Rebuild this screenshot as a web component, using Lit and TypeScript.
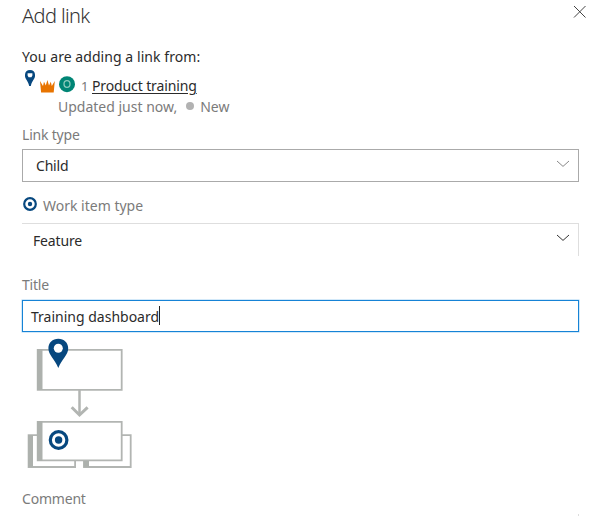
import { LitElement, html, css, svg } from "lit";
import { customElement } from "lit/decorators.js";

const pin = svg`<path fill="#07487f" fill-rule="evenodd" d="M5 0C2 0 0 1.8 0 4.7V6C0 9 3 10.5 4.2 16H5.8C7 10.5 10 9 10 6V4.7C10 1.8 8 0 5 0ZM2.6 3.2H7.4V5.6L6.4 7.2H3.6L2.6 5.6Z"/>`;

@customElement("app-root")
export class AppRoot extends LitElement {
  static styles = css`
    :host {
      display: block;
      box-sizing: border-box;
      width: 596px;
      height: 516px;
      overflow: hidden;
      padding: 0 17px 0 22px;
      background: #fff;
      font: 14px/20px "Noto Sans", "Open Sans", sans-serif;
      color: #2b2b2b;
      white-space: nowrap;
    }
    svg { display: block; flex: none; }
    .header { display: flex; justify-content: space-between; height: 47px; }
    h1 { margin: 2px 0 0; font: 300 20px/28px "Noto Sans", "Open Sans", sans-serif; letter-spacing: -0.6px; color: #333; }
    .close { margin: 5px -8px 0 0; }
    .intro { letter-spacing: 0.06px; height: 22px; }
    .item { display: flex; height: 28px; }
    .pin { margin: 1px 0 0 3px; }
    .crown { margin: 11px 0 0 5px; }
    .avatar { margin: 7px 0 0 4px; }
    .number { margin: 7px 4px 0 6px; width: 7px; font-size: 13px; color: #777; }
    .link { margin-top: 7px; letter-spacing: -0.12px; text-decoration: underline; text-underline-offset: 2px; }
    .meta { display: flex; align-items: center; height: 20px; padding-left: 36px; color: #7b7b7b; }
    .dot { width: 8px; height: 8px; border-radius: 50%; background: #b2b2b2; margin: -2px 6px 0 9px; }
    .label { display: flex; height: 20px; color: #7b7b7b; letter-spacing: -0.2px; }
    .link-type { margin-top: 8px; }
    .work-type { margin-top: 14px; gap: 6px; letter-spacing: 0; }
    .target { margin: 1px 0 0 1px; }
    .title { margin-top: 19px; }
    .comment { margin-top: 13px; }
    .field { display: flex; align-items: center; justify-content: space-between; box-sizing: border-box; height: 33px; width: 557px; }
    .type-field { margin-top: 4px; border: 1px solid #aaa; padding: 1px 8px 0 13px; letter-spacing: -0.2px; }
    .type-field svg { margin-top: -5px; }
    .item-field { margin-top: 7px; border-top: 1px solid #dedede; border-right: 1px solid #dedede; padding: 2px 8px 0 11px; letter-spacing: -0.15px; }
    .item-field svg { margin-top: -6px; }
    .title-field { height: 32px; margin-top: 5px; border: 1px solid #1683d6; padding: 1px 8px 0; justify-content: flex-start; letter-spacing: 0; box-shadow: 0 0 0 0.5px #a6d2f3; }
    .caret { width: 1px; height: 19px; background: #222; margin-top: -2px; }
    .diagram { height: 144px; }
    .edge { height: 6px; width: 1px; margin: 5px 0 0 556px; background: #ddd; }
  `;

  chevron(color: string) {
    return html`<svg width="14" height="8" viewBox="0 0 14 8"><path d="M1 1L7 6.4L13 1" fill="none" stroke=${color} stroke-width="1"/></svg>`;
  }

  render() {
    return html`
      <div class="header">
        <h1>Add link</h1>
        <svg class="close" width="14" height="14" viewBox="0 0 14 14"><path d="M1 1L12.5 12.5M12.5 1L1 12.5" stroke="#444" stroke-width="1"/></svg>
      </div>
      <div class="intro">You are adding a link from:</div>
      <div class="item">
        <svg class="pin" width="10" height="17" viewBox="0 0 10 17">${pin}</svg>
        <svg class="crown" width="15" height="13" viewBox="0 0 15 13"><path fill="#e87400" d="M0 1L3 6L4 1.8L5.8 5.5L7.4 0L9 5.5L10.8 1.8L11.8 6L14.8 1L13.7 12.5H1.1Z"/></svg>
        <svg class="avatar" width="16" height="17" viewBox="0 0 16 17"><circle cx="8" cy="8.2" r="8" fill="#008575"/><ellipse cx="8" cy="8" rx="3" ry="3.4" fill="none" stroke="#8bcabc" stroke-width="1.3"/></svg>
        <span class="number">1</span><span class="link">Product training</span>
      </div>
      <div class="meta"><span>Updated just now,</span><i class="dot"></i><span>New</span></div>
      <div class="label link-type">Link type</div>
      <div class="field type-field"><span>Child</span>${this.chevron("#888")}</div>
      <div class="label work-type">
        <svg class="target" width="14" height="14" viewBox="0 0 14 14"><circle cx="7" cy="7" r="5.8" fill="none" stroke="#07487f" stroke-width="2.2"/><circle cx="7" cy="7" r="2.2" fill="#07487f"/></svg>
        <span>Work item type</span>
      </div>
      <div class="field item-field"><span>Feature</span>${this.chevron("#333")}</div>
      <div class="label title">Title</div>
      <div class="field title-field"><span>Training dashboard</span><i class="caret"></i></div>
      <svg class="diagram" width="140" height="144" viewBox="22 332 140 144">
        <g fill="#fff" stroke="#b2b5b2" stroke-width="1.8">
          <path d="M28.6 435.2H75.1V467H28.6ZM84 435.2H130.7V467H84Z"/>
          <path d="M37.7 349.8H121.7V389.8H37.7ZM37.7 421.8H121.7V460.3H37.7Z"/>
        </g>
        <path fill="#adb1ad" d="M28 435H33V467H28ZM83.5 461H89V467H83.5ZM37 349H42.5V390H37ZM37 421H42.5V461H37Z"/>
        <path d="M79.5 390V414" stroke="#b2b5b2" stroke-width="2.5"/>
        <path d="M71.7 407.3L79.5 415L87.6 407.3" fill="none" stroke="#b2b5b2" stroke-width="3"/>
        <path fill="#07487f" d="M58.3 338.7C52.5 338.7 48.4 342.7 48.4 348.3C48.4 355 54.6 359 58.3 368C62 359 68.2 355 68.2 348.3C68.2 342.7 64 338.7 58.3 338.7Z"/>
        <circle cx="58.3" cy="348.2" r="4.5" fill="#fff"/>
        <circle cx="58.6" cy="440" r="8.3" fill="none" stroke="#07487f" stroke-width="3.2"/>
        <circle cx="58.6" cy="440" r="3.7" fill="#07487f"/>
      </svg>
      <div class="label comment">Comment</div>
      <div class="edge"></div>
    `;
  }
}
